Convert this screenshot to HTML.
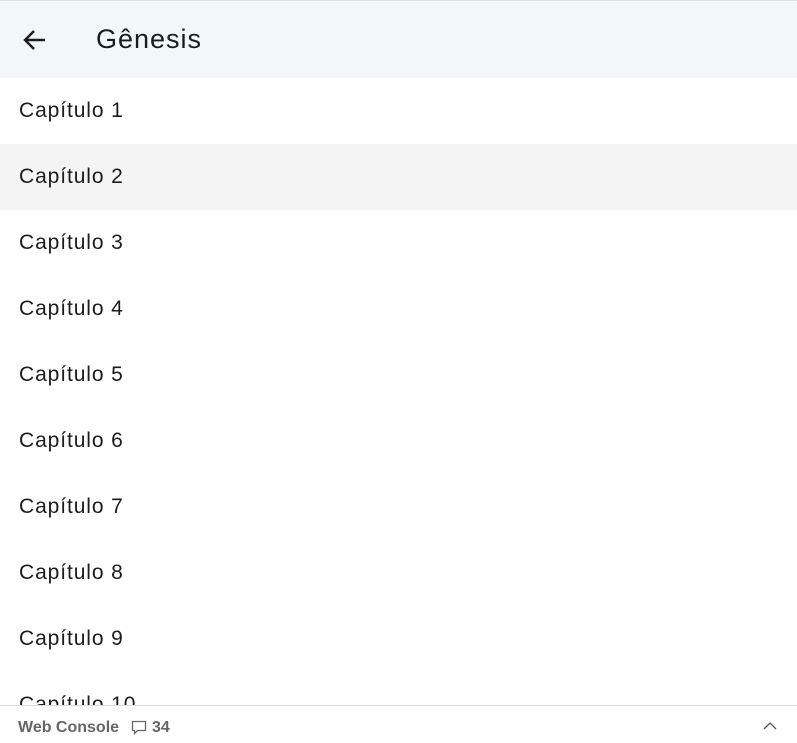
<!DOCTYPE html>
<html><head><meta charset="utf-8"><style>
*{margin:0;padding:0;box-sizing:border-box}
body{width:797px;height:743px;overflow:hidden;background:#fff;font-family:"Liberation Sans",sans-serif;position:relative}
.top{position:absolute;left:0;top:0;width:797px;height:78px;background:#f2f7f8;border-top:1px solid #dde2e3}
.top svg{position:absolute;left:22px;top:27px}
.title{position:absolute;left:96px;top:23px;font-size:27px;color:#1a1c1e;letter-spacing:1px}
.item{position:absolute;left:0;width:797px;height:66px;font-size:21px;color:#1a1c1e;padding-left:19px;line-height:66px;letter-spacing:0.9px}
.foot{position:absolute;left:0;top:705px;width:797px;height:38px;background:#fff;border-top:1px solid #ddd}
.foot .t{position:absolute;left:18px;top:13px;font-size:16px;font-weight:bold;color:#666;letter-spacing:0px}
.foot .n{position:absolute;left:152px;top:13px;font-size:16px;font-weight:bold;color:#666}
</style></head><body>
<div class="top">
<svg width="26" height="24" viewBox="0 0 26 24"><path d="M23 12H4M12 3L3 12l9 9" fill="none" stroke="#1a1c1e" stroke-width="2.4"/></svg>
<div class="title">Gênesis</div></div>
<div class="item" style="top:78px">Capítulo 1</div>
<div class="item" style="top:144px;background:#f4f4f4">Capítulo 2</div>
<div class="item" style="top:210px">Capítulo 3</div>
<div class="item" style="top:276px">Capítulo 4</div>
<div class="item" style="top:342px">Capítulo 5</div>
<div class="item" style="top:408px">Capítulo 6</div>
<div class="item" style="top:474px">Capítulo 7</div>
<div class="item" style="top:540px">Capítulo 8</div>
<div class="item" style="top:606px">Capítulo 9</div>
<div class="item" style="top:672px">Capítulo 10</div>
<div class="foot">
<div class="t">Web Console</div>
<svg style="position:absolute;left:131px;top:14px" width="16" height="16" viewBox="0 0 16 16"><path d="M1.5 1.5h13v9h-8l-3 3v-3h-2z" fill="none" stroke="#666" stroke-width="1.3"/></svg>
<div class="n">34</div>
<svg style="position:absolute;left:762px;top:15px" width="16" height="10" viewBox="0 0 16 10"><path d="M2 8l6-6 6 6" fill="none" stroke="#555" stroke-width="1.3"/></svg>
</div>
</body></html>
